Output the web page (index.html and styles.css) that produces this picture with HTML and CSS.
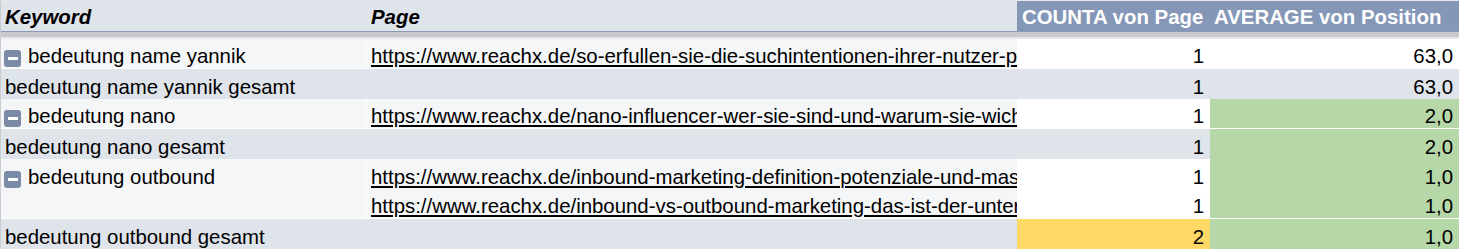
FILE: index.html
```html
<!DOCTYPE html>
<html lang="de">
<head>
<meta charset="utf-8">
<title>Pivot</title>
<link rel="stylesheet" href="styles.css">
</head>
<body>
<div class="pivot">
  <div class="row head">
    <div class="cell hk">Keyword</div>
    <div class="cell hk">Page</div>
    <div class="cell hv">COUNTA von Page</div>
    <div class="cell hv">AVERAGE von Position</div>
  </div>
  <div class="band"></div>

  <div class="row data sep">
    <div class="cell key"><span class="toggle"></span>bedeutung name yannik</div>
    <div class="cell url"><span class="link">https://www.reachx.de/so-erfullen-sie-die-suchintentionen-ihrer-nutzer-perfekt/</span></div>
    <div class="cell num white">1</div>
    <div class="cell num white">63,0</div>
  </div>
  <div class="row total">
    <div class="cell key plain">bedeutung name yannik gesamt</div>
    <div class="cell url"></div>
    <div class="cell num">1</div>
    <div class="cell num">63,0</div>
  </div>

  <div class="row data sep">
    <div class="cell key"><span class="toggle"></span>bedeutung nano</div>
    <div class="cell url"><span class="link">https://www.reachx.de/nano-influencer-wer-sie-sind-und-warum-sie-wichtig-sind/</span></div>
    <div class="cell num white">1</div>
    <div class="cell num green">2,0</div>
  </div>
  <div class="row total">
    <div class="cell key plain">bedeutung nano gesamt</div>
    <div class="cell url"></div>
    <div class="cell num">1</div>
    <div class="cell num green">2,0</div>
  </div>

  <div class="row data">
    <div class="cell key"><span class="toggle"></span>bedeutung outbound</div>
    <div class="cell url"><span class="link">https://www.reachx.de/inbound-marketing-definition-potenziale-und-massnahmen/</span></div>
    <div class="cell num white">1</div>
    <div class="cell num green">1,0</div>
  </div>
  <div class="row data sep">
    <div class="cell key"></div>
    <div class="cell url"><span class="link">https://www.reachx.de/inbound-vs-outbound-marketing-das-ist-der-unterschied/</span></div>
    <div class="cell num white">1</div>
    <div class="cell num green">1,0</div>
  </div>
  <div class="row total">
    <div class="cell key plain">bedeutung outbound gesamt</div>
    <div class="cell url"></div>
    <div class="cell num yellow">2</div>
    <div class="cell num green">1,0</div>
  </div>
</div>
</body>
</html>
```

FILE: styles.css
```css
html, body {
  margin: 0;
  padding: 0;
  background: #ffffff;
}

body {
  font-family: "Liberation Sans", Arial, sans-serif;
  font-size: 20.4px;
  color: #000000;
  overflow: hidden;
}

.pivot {
  width: 1459px;
  box-sizing: border-box;
  border-top: 1px solid #e6e7e9;
  border-left: 1px solid #c9ccd1;
}

.row {
  display: grid;
  grid-template-columns: 366px 650px 193px 249px;
  height: 30px;
  box-sizing: border-box;
}

.row.sep {
  border-bottom: 1px solid #ffffff;
}

.cell {
  display: flex;
  align-items: flex-end;
  line-height: 23px;
  white-space: nowrap;
  overflow: hidden;
  box-sizing: border-box;
}

/* header */
.head {
  height: 31px;
  border-bottom: 1px solid #8b9ab5;
}

.head .cell {
  padding-bottom: 2px;
}

.hk {
  background: #dfe3ea;
  font-weight: bold;
  font-style: italic;
  padding-left: 4px;
}

.hv {
  background: #8597b7;
  color: #ffffff;
  font-weight: bold;
  padding-left: 5px;
}

.head .hv:last-child {
  padding-left: 4px;
}

.band {
  height: 7px;
  background: linear-gradient(#c7c9cd 0, #c7c9cd 5px, #e4e6ea 5px);
}

/* body rows */
.data .key,
.data .url {
  background: #f5f6f8;
}

.data .key {
  border-right: 1px solid #ffffff;
}

.total .cell {
  background: #dfe3ea;
}

.key {
  padding-left: 3px;
}

.key.plain {
  padding-left: 4px;
}

.toggle {
  display: inline-flex;
  align-items: center;
  justify-content: center;
  width: 17px;
  height: 17px;
  margin: 0 7px 1px 0;
  border-radius: 3px;
  background: #7b8ba7;
  flex: none;
}

.toggle::after {
  content: "";
  display: block;
  width: 10px;
  height: 3px;
  background: #ffffff;
}

.url {
  padding-left: 4px;
}

.link {
  text-decoration: underline;
  color: #000000;
}

.num {
  justify-content: flex-end;
  padding-right: 6px;
}

.row .white {
  background: #ffffff;
}

.row .green {
  background: #b6d7a8;
}

.row .yellow {
  background: #ffd966;
}
```
